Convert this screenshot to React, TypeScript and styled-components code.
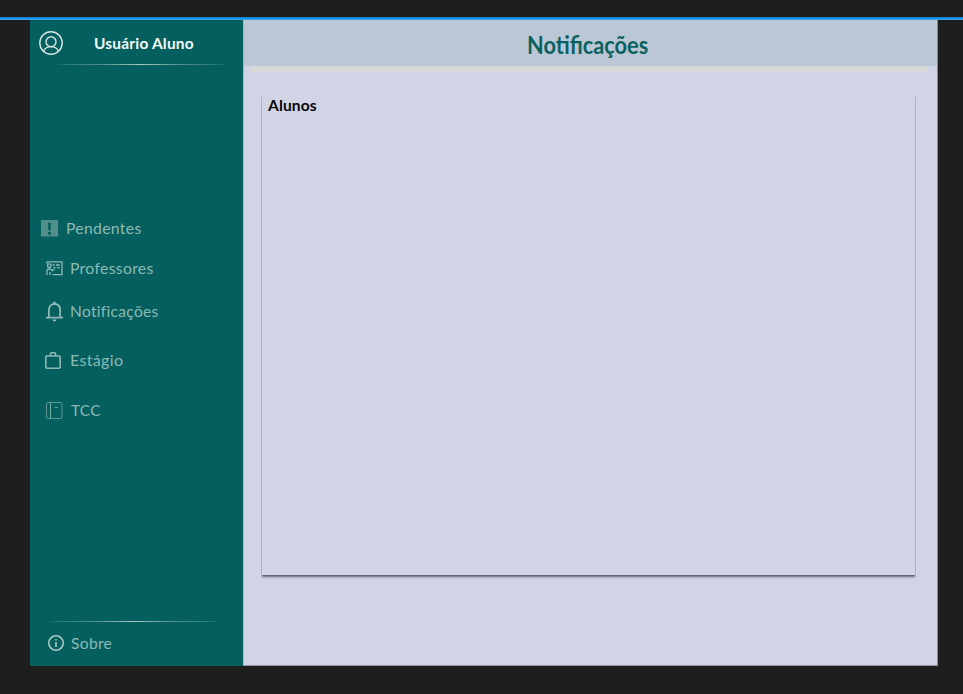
import React from 'react';
import styled, { createGlobalStyle } from 'styled-components';

const Global = createGlobalStyle`
  * { box-sizing: border-box; }
  body { margin: 0; background: #1e1e1e; font-family: Lato, "Open Sans", sans-serif; overflow: hidden; }
  svg { display: block; flex: none; }
`;

const Canvas = styled.div`
  width: 963px;
  height: 694px;
  padding-top: 17px;
  background: #1e1e1e;
`;

const SelectionLine = styled.div`
  height: 3px;
  background: linear-gradient(#147fd0 0 1px, #0d99ff 1px 2px, #3c9fea 2px 3px);
`;

const Frame = styled.div`
  display: flex;
  width: 908px;
  height: 646px;
  margin-left: 30px;
  border-right: 1px solid #858a98;
  border-bottom: 1px solid #8f93a0;
`;

const Sidebar = styled.aside`
  width: 213px;
  height: 646px;
  display: flex;
  flex-direction: column;
  background: #055f5e;
`;

const Profile = styled.div`
  display: flex;
  align-items: center;
  height: 44px;
  padding: 2px 0 0 9px;
`;

const Divider = styled.div<{ $left: number }>`
  width: 174px;
  height: 1px;
  margin-left: ${(p) => p.$left}px;
  background: linear-gradient(90deg, #14696600, #2f7c78 8%, #51908b 28%, #a5c8bf 50%, #51908b 72%, #2f7c78 92%, #14696600);
`;

const Label = styled.span<{ $size: number; $spacing: number; $stretch: number; $weight?: number; $color: string }>`
  display: inline-block;
  font-size: ${(p) => p.$size}px;
  font-weight: ${(p) => p.$weight ?? 400};
  letter-spacing: ${(p) => p.$spacing}px;
  line-height: 20px;
  color: ${(p) => p.$color};
  white-space: nowrap;
  transform: scaleX(${(p) => p.$stretch});
  transform-origin: left center;
`;

const UserName = styled(Label)`
  margin-left: 31px;
`;

const Menu = styled.nav`
  flex: 1;
  padding-top: 143px;
`;

const Item = styled.a<{ $height: number; $inset: number; $gap: number }>`
  display: flex;
  align-items: center;
  height: ${(p) => p.$height}px;
  padding-left: ${(p) => p.$inset}px;
  gap: ${(p) => p.$gap}px;
  color: #8db9b5;
`;

const AboutItem = styled(Item)`
  padding-bottom: 2px;
`;

const Main = styled.main`
  flex: 1;
  height: 645px;
  background: #d1d4e5;
  border-left: 1px solid #a4bbc6;
`;

const Header = styled.header`
  display: flex;
  height: 46px;
  padding: 9px 0 0 283px;
  background: #bbc7d5;
`;

const Strip = styled.div`
  height: 6px;
  width: 677px;
  margin-left: 7px;
  background: #d9d9d9;
`;

const Panel = styled.section`
  width: 653px;
  height: 480px;
  margin: 23px 0 0 18px;
  padding: 0 6px;
  background: #d1d4e5;
  box-shadow: 0 2px 2px rgba(0, 0, 0, 0.5), 0 1px 0 rgba(0, 0, 0, 0.1);
  clip-path: inset(0 -1px -6px -1px);
`;

const Title = styled.h1`
  margin: 0;
  height: 30px;
  font-size: 25px;
  line-height: 30px;
  font-weight: 700;
  color: #0a6260;
  white-space: nowrap;
  transform: scaleX(0.87);
  transform-origin: left;
`;

const UserIcon = () => (
  <svg width="24" height="24" viewBox="0 0 24 24" fill="none" stroke="#d5e6e3" strokeWidth="1.4">
    <circle cx="12" cy="12" r="11.2" />
    <circle cx="12" cy="10.7" r="5" />
    <path d="M4.5 20.2C6 17 8.5 15.6 12 15.6s6 1.4 7.5 4.6" />
  </svg>
);

const AlertIcon = () => (
  <svg width="17" height="17" viewBox="0 0 17 17">
    <path fill="#508f8c" d="M0 0h17v16.5H0z" />
    <path fill="#055f5e" d="M7 2.8h3l-.4 7.6H7.4zM7 12h3v2.4H7z" />
  </svg>
);

const TeacherIcon = () => (
  <svg width="17" height="15" viewBox="0 0 17 15" fill="none" stroke="currentColor" strokeWidth="1.3">
    <path d="M1 .8h15v12.8H6.5M6.5 4h2.2M10 4h3.7M7.5 6.7h2M11 6.7h2.7M1 .8v2" />
    <circle cx="3.3" cy="4.7" r="1.8" />
    <path d="M1 14V9.8c0-1.4 1-1.8 2.4-1.8h1.2l1.6 1.7L8.5 8M4 14v-3" />
  </svg>
);

const BellIcon = () => (
  <svg width="17" height="21" viewBox="0 0 17 21" fill="none" stroke="currentColor" strokeWidth="1.8">
    <path d="M0 16.7h17M2.9 16.5V9.2C2.9 5.5 5 3 8.5 3s5.6 2.5 5.6 6.2v7.3" />
    <path d="M7 2.7V1.9a1.5 1.5 0 0 1 3 0v.8z" fill="currentColor" stroke="none" />
    <path d="M6.5 18.5h4a2 2 0 0 1-4 0z" fill="currentColor" stroke="none" />
  </svg>
);

const BagIcon = () => (
  <svg width="16" height="17" viewBox="0 0 16 17" fill="none" stroke="currentColor" strokeWidth="1.6">
    <rect x=".8" y="4" width="14.4" height="12.2" rx="1.2" />
    <path d="M5.4 4V2.2Q5.4 .8 6.6 .8h2.8Q10.6 .8 10.6 2.2V4" />
  </svg>
);

const BookIcon = () => (
  <svg width="17" height="17" viewBox="0 0 17 17" fill="none" stroke="#5d9793" strokeWidth="1">
    <rect x=".5" y=".5" width="15.5" height="16" rx="1.5" />
    <path d="M4.5.5v16" stroke="#77aaa6" />
    <path d="M8.5 5.5H12" />
  </svg>
);

const InfoIcon = () => (
  <svg width="16" height="16" viewBox="0 0 16 16" fill="none" stroke="#a5c8c5" strokeWidth="1.6">
    <circle cx="8" cy="8" r="7.2" />
    <path d="M8 7v5M8 4v1.6" />
  </svg>
);

const items = [
  { text: 'Pendentes', icon: <AlertIcon />, height: 40, inset: 11, gap: 8, stretch: 1.05 },
  { text: 'Professores', icon: <TeacherIcon />, height: 40, inset: 16, gap: 7, stretch: 1.05 },
  { text: 'Notificações', icon: <BellIcon />, height: 46, inset: 16, gap: 7, stretch: 1.035 },
  { text: 'Estágio', icon: <BagIcon />, height: 52, inset: 15, gap: 9, stretch: 1.07 },
  { text: 'TCC', icon: <BookIcon />, height: 48, inset: 16, gap: 8, stretch: 1.02 },
];

export default function App() {
  return (
    <>
      <Global />
      <Canvas>
        <SelectionLine />
        <Frame>
          <Sidebar>
            <Profile>
              <UserIcon />
              <UserName $size={15} $spacing={0.2} $stretch={1.03} $weight={700} $color="#f2f8f7">Usuário Aluno</UserName>
            </Profile>
            <Divider $left={24} />
            <Menu>
              {items.map((item) => (
                <Item key={item.text} $height={item.height} $inset={item.inset} $gap={item.gap}>
                  {item.icon}
                  <Label $size={15} $spacing={0.3} $stretch={item.stretch} $color="#8db9b5">{item.text}</Label>
                </Item>
              ))}
            </Menu>
            <Divider $left={17} />
            <AboutItem $height={44} $inset={18} $gap={7}>
              <InfoIcon />
              <Label $size={15} $spacing={0.3} $stretch={1.04} $color="#8db9b5">Sobre</Label>
            </AboutItem>
          </Sidebar>
          <Main>
            <Header><Title>Notificações</Title></Header>
            <Strip />
            <Panel>
              <Label $size={15} $spacing={0.1} $stretch={1.04} $weight={700} $color="#080808">Alunos</Label>
            </Panel>
          </Main>
        </Frame>
      </Canvas>
    </>
  );
}
